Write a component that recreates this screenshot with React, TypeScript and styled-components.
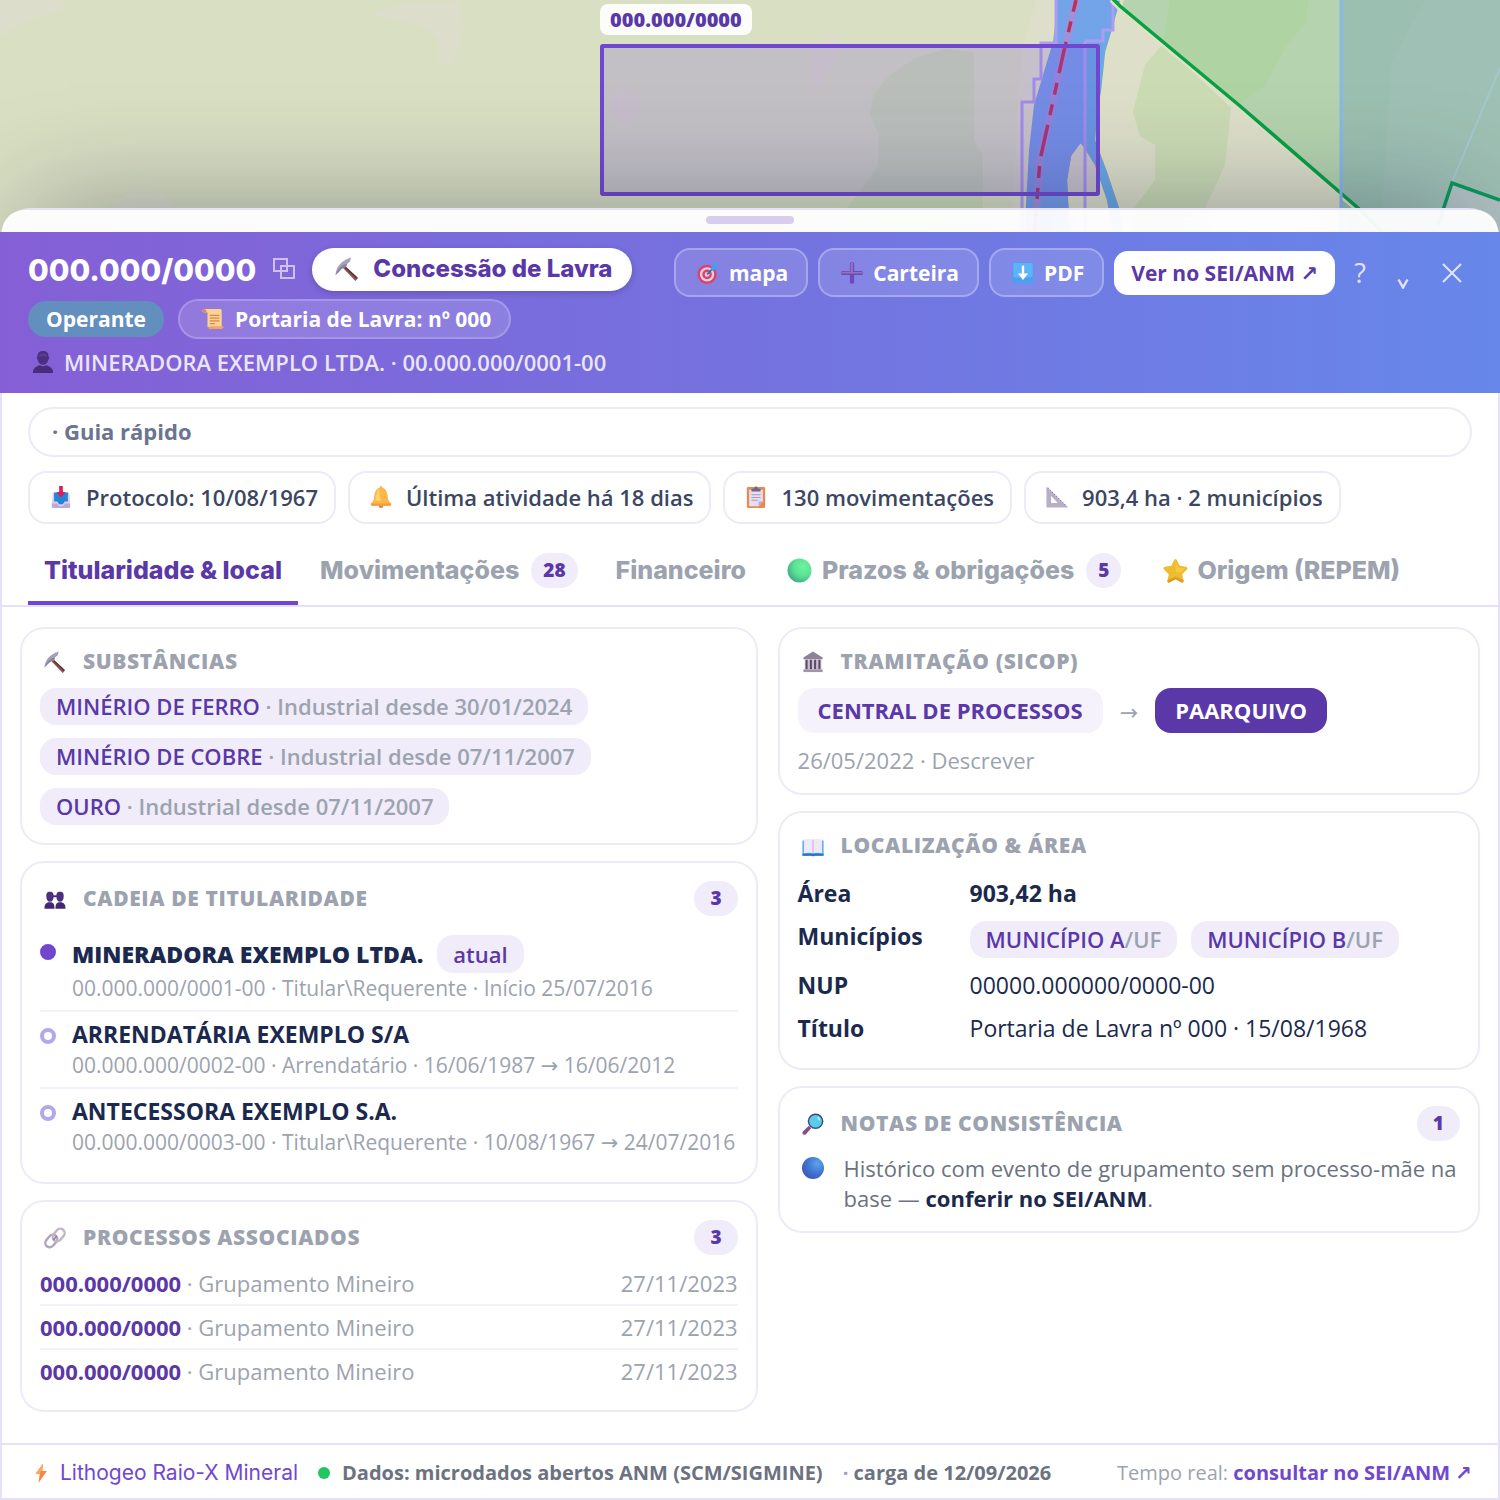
import React, { useState } from "react";
import styled, { createGlobalStyle } from "styled-components";

const c = {
  violet: "#7048d0",
  deep: "#5a38a8",
  lilac: "#f0ecfa",
  line: "#eeeafa",
  edge: "#e6e1f8",
  muted: "#9ca3af",
  slate: "#6b7280",
  ink: "#1b294e",
};
const sans = `"Open Sans", "DejaVu Sans", "Noto Sans", sans-serif`;
const display = `Inter, "Open Sans", sans-serif`;

const GlobalStyle = createGlobalStyle`
  *, *::before, *::after { box-sizing: border-box; }
  body { margin: 0; background: #d9dfc2; font-family: ${sans}; font-size: 22px; line-height: 30px; color: ${c.ink}; }
  button { font: inherit; color: inherit; background: none; border: 0; padding: 0; cursor: pointer; }
  a { color: inherit; text-decoration: none; }
  h1, h2, p, ul, ol, dl, dd { margin: 0; padding: 0; list-style: none; }
`;

/* ---------- icons ---------- */

type IconName =
  | "pick" | "scroll" | "person" | "target" | "plus" | "download" | "inbox" | "bell" | "clipboard"
  | "ruler" | "green" | "star" | "people" | "link" | "bank" | "book" | "lens" | "blue" | "bolt";

const drawings: Record<IconName, React.ReactNode> = {
  pick: (
    <>
      <path d="M9 8 L23 21 L20.500 24 L7.500 10.500Z" fill="#8a5350" />
      <path d="M11 10 L22.500 20.500 L21.500 21.800 L10 11Z" fill="#5f3440" />
      <path d="M0.500 18 C1 11 5 4 16 0.500 L15 4.500 L12 7 L11 10 L8 11 C5 13 4 15 0.500 18Z" fill="#a99fba" />
      <path d="M0.500 18 C3 12 7 7 12 7 L11 10 L8 11 C5 13 4 15 0.500 18Z" fill="#8c8299" />
    </>
  ),
  scroll: (
    <>
      <path d="M2 1 H20 C21 1 21.500 2 21.500 3.500 V21 H6 V5 H2 C0 4 0 1 2 1Z" fill="#fbd391" />
      <path d="M2 1 C4 1 5 2 5 5 H2 C0 4 0 1 2 1Z" fill="#d98a55" />
      <path d="M8 20 H23.500 C23.500 22 23 23 21 23 H6 C8 23 8 21 8 20Z" fill="#f0a468" />
      <path d="M8.500 8 H19 M8.500 11 H19 M8.500 14 H19 M8.500 17 H14" stroke="#d98556" strokeWidth="1.200" />
    </>
  ),
  person: (
    <>
      <path d="M12 0 C16.500 0 18 2.500 18 6 C19 6 19 9 17.800 9.500 C17 13 15 15 12 15 S7 13 6.200 9.500 C5 9 5 6 6 6 C6 2.500 7.500 0 12 0Z" fill="#4d2f80" />
      <path d="M1 24 C1 18 5 16.500 9 15.500 C11 17 13 17 15 15.500 C19 16.500 23 18 23 24Z" fill="#4a2c7c" />
      <path d="M8 4 C10 2 14 2 16 4 V7 C14 5 10 5 8 7Z" fill="#5b3b92" />
    </>
  ),
  target: (
    <>
      <circle cx="11" cy="13.500" r="10.500" fill="#e0416b" />
      <circle cx="11" cy="13.500" r="7.800" fill="#d8cfe4" />
      <circle cx="11" cy="13.500" r="5.200" fill="#e0416b" />
      <circle cx="11" cy="13.500" r="2.600" fill="#d8cfe4" />
      <path d="M11 13.500 L18 6.500" stroke="#2c6fb4" strokeWidth="1.800" />
      <path d="M15 8.500 L16 3.500 L19.500 0.500 L20.300 3.700 L23.500 4.700 L20.500 8 L15.800 9.300Z" fill="#3aa5ef" />
    </>
  ),
  plus: (
    <>
      <path d="M9.700 1 Q12 -0.500 14.300 1 V9.700 H23 Q24.500 12 23 14.300 H14.300 V23 Q12 24.500 9.700 23 V14.300 H1 Q-0.500 12 1 9.700 H9.700Z" fill="#7147ba" />
      <path d="M10.500 1 H13 V11 H23 V12.500 H1 V10.500 H10.500Z" fill="#8f76bb" />
    </>
  ),
  download: (
    <>
      <rect x="0.500" y="0.500" width="23" height="23" rx="2" fill="#4d9ff0" />
      <rect x="1.500" y="1" width="21" height="16" rx="2" fill="#5fb3fb" />
      <path d="M12 4 V17" stroke="#fff" strokeWidth="2.600" />
      <path d="M6.500 12.500 H17.500 L12 19.500Z" fill="#fff" />
    </>
  ),
  inbox: (
    <>
      <path d="M3 7 H21 L22 19 V22 Q22 24 20 24 H4 Q2 24 2 22 V19Z" fill="#d6d0e4" />
      <path d="M4.500 7 H19.500 V17 H16 L14 20 H10 L8 17 H4.500Z" fill="#2485d6" />
      <path d="M2 19 H8 L10 22 H14 L16 19 H22 V22 Q22 24 20 24 H4 Q2 24 2 22Z" fill="#bda9d6" />
      <path d="M10 0 H14 V6.500 H17 L12 12.500 L7 6.500 H10Z" fill="#d91f5a" />
    </>
  ),
  bell: (
    <>
      <circle cx="12" cy="21.500" r="2.500" fill="#e27b39" />
      <path d="M12 0 Q13.500 0 13.500 2 C18 3 19 8 19.500 13 Q20 17 23 19 Q23.500 21.500 21 21.500 H3 Q0.500 21.500 1 19 Q4 17 4.500 13 C5 8 6 3 10.500 2 Q10.500 0 12 0Z" fill="#fdb748" />
      <path d="M10.500 3 C7 5 6.500 12 6 16 H12 C10 11 10 6 10.500 3Z" fill="#ffd56f" />
      <path d="M1 19 H23 Q23.500 21.500 21 21.500 H3 Q0.500 21.500 1 19Z" fill="#f59b3c" />
    </>
  ),
  clipboard: (
    <>
      <rect x="2" y="1" width="20" height="23" rx="1.500" fill="#e68a51" />
      <path d="M4.500 4 H19.500 V17 L15 22 H4.500Z" fill="#e6ddf3" />
      <path d="M15 22 V17 H19.500Z" fill="#b9a6d3" />
      <path d="M7 3 H9.500 Q12 -2.500 14.500 3 H17 V6 H7Z" fill="#716782" />
      <path d="M7 9.500 H17 M7 12.500 H17 M7 15.500 H14" stroke="#a99dba" strokeWidth="1.200" />
    </>
  ),
  ruler: (
    <>
      <path fillRule="evenodd" d="M0.500 0.500 L24 23.500 H0.500Z M5.500 11 V18.500 H13Z" fill="#b7b0c4" />
      <path d="M2 2 L23 22.500" stroke="#9277c8" strokeWidth="1.300" strokeDasharray="1.200 2" />
    </>
  ),
  green: <circle cx="12" cy="12" r="11.500" fill="url(#ball-green)" />,
  blue: <circle cx="12" cy="12" r="12" fill="url(#ball-blue)" />,
  star: (
    <>
      <path d="M12 1 Q13 1 13.600 2.500 L16 7.500 L22 8.500 Q24.500 9.300 23 11 L18.500 15.500 L19.800 22 Q19.800 24.200 17.800 23.500 L12 20.500 L6.200 23.500 Q4.200 24.200 4.200 22 L5.500 15.500 L1 11 Q-0.500 9.300 2 8.500 L8 7.500 L10.400 2.500 Q11 1 12 1Z" fill="#eebd2f" />
      <path d="M12 3 L15 9 L21 10 L16.500 14.500 L12 13Z" fill="#f5c93d" />
      <path d="M4.300 21 L12 18 L19.700 21 Q20 24.200 17.800 23.500 L12 20.500 L6.200 23.500 Q4.200 24.200 4.300 21Z" fill="#dc9d25" />
    </>
  ),
  people: (
    <>
      <path d="M6.500 4 C10 4 10.500 6 10.500 9 C10.500 13 9 15 6.500 15 S2.500 13 2.500 9 C2.500 6 3 4 6.500 4Z M17.500 4 C21 4 21.500 6 21.500 9 C21.500 13 20 15 17.500 15 S13.500 13 13.500 9 C13.500 6 14 4 17.500 4Z" fill="#4d2f80" />
      <path d="M10 8 H14 V10 H10Z" fill="#3d2468" />
      <path d="M0.500 22.500 C0.500 17 3 15.500 6.500 15.500 C10 15.500 11.500 17 11.500 22.500Z M12.500 22.500 C12.500 17 14 15.500 17.500 15.500 C21 15.500 23.500 17 23.500 22.500Z" fill="#432774" />
    </>
  ),
  link: (
    <g fill="none" strokeWidth="2.600">
      <rect x="0.500" y="10.500" width="15" height="9.500" rx="4.750" transform="rotate(-50 8 15.300)" stroke="#b3a5bb" />
      <rect x="8.500" y="4" width="15" height="9.500" rx="4.750" transform="rotate(-50 16 8.700)" stroke="#c3b6c8" />
      <path d="M10 14.500 L14 9.500" stroke="#9686a0" strokeWidth="2" />
    </g>
  ),
  bank: (
    <>
      <path d="M12 0.500 L22.500 7 V9 H1.500 V7Z" fill="#8d8399" />
      <path d="M3 9 H21 V20 H3Z" fill="#c9bfd1" />
      <path d="M5 9.500 V20 M9.700 9.500 V20 M14.300 9.500 V20 M19 9.500 V20" stroke="#594b69" strokeWidth="2.200" />
      <path d="M1.500 20 H22.500 V23 H1.500Z" fill="#9f95a9" />
    </>
  ),
  book: (
    <>
      <path d="M0.500 6 H23.500 V22.500 H0.500Z" fill="#4aa4ea" />
      <path d="M0.500 20.500 H23.500 V22.500 H13.500 L12 23.500 L10.500 22.500 H0.500Z" fill="#2772c9" />
      <path d="M2 5 Q8 3.500 12 5 Q16 3.500 22 5 V20 Q16 18.800 12 20 Q8 18.800 2 20Z" fill="#efe8f8" />
      <path d="M12 5 V20" stroke="#cfbfe4" strokeWidth="1.500" />
    </>
  ),
  lens: (
    <>
      <path d="M7.500 14 L10 16.500 L4 23.500 Q1.500 24.500 0.500 22 Q0.200 20.800 1.500 19.500Z" fill="#8b4a85" />
      <circle cx="14.800" cy="9" r="8.500" fill="#3a4a80" />
      <circle cx="14.800" cy="9" r="6.900" fill="#5ccbea" />
      <path d="M17 4.500 Q19.500 6 19 8" stroke="#c9f2fb" strokeWidth="1.400" fill="none" />
    </>
  ),
  bolt: (
    <>
      <path d="M14.500 0.500 L5.500 13 H10.500 L9 24 L19 9.500 H13.500Z" fill="#f98448" />
      <path d="M14.500 0.500 L5.500 13 H10.500 L12 9.500 H13.500Z" fill="#fbab55" />
    </>
  ),
};

const IconBox = styled.span<{ $box: number }>`
  flex: none;
  display: inline-flex;
  align-items: center;
  justify-content: center;
  width: ${(p) => p.$box}px;
`;

function Icon({ name, size = 22, box = 30 }: { name: IconName; size?: number; box?: number }) {
  return (
    <IconBox $box={box} aria-hidden="true">
      <svg width={size} height={size} viewBox="0 0 24 24">{drawings[name]}</svg>
    </IconBox>
  );
}

/* ---------- map ---------- */

const Page = styled.div`
  display: flex;
  flex-direction: column;
  min-height: 100vh;
`;

const MapArea = styled.section`
  position: relative;
  height: 240px;
  overflow: hidden;
`;

const MapDrawing = styled.svg`
  display: block;
  width: 100%;
  height: 100%;
`;

const MapLabel = styled.span`
  position: absolute;
  top: 4px;
  left: 40%;
  padding: 2px 10px 1px;
  border-radius: 8px;
  background: rgba(255, 255, 255, 0.92);
  color: ${c.deep};
  font-size: 20px;
  line-height: 28px;
  font-weight: 800;
`;

function MapView() {
  return (
    <MapArea aria-label="Mapa">
      <MapDrawing viewBox="0 0 1500 240" preserveAspectRatio="xMidYMin slice">
        <defs>
          <radialGradient id="ball-green" cx="0.650" cy="0.350" r="0.750">
            <stop offset="0" stopColor="#6bf59d" />
            <stop offset="0.500" stopColor="#5be394" />
            <stop offset="1" stopColor="#3fa287" />
          </radialGradient>
          <radialGradient id="ball-blue" cx="0.700" cy="0.300" r="0.800">
            <stop offset="0" stopColor="#5ba3ea" />
            <stop offset="0.600" stopColor="#3f72d0" />
            <stop offset="1" stopColor="#3f55b8" />
          </radialGradient>
        </defs>
        <rect width="1500" height="240" fill="#d9dfc2" />
        <path d="M0 0 H65 L62 10 L24 22 L0 37Z M368 14 L400 5 L420 2 H460 L463 30 L453 66 L438 62 V40 L425 27 L400 20Z M118 200 L135 190 L165 193 L175 208 H115Z" fill="#dcdecb" />
        <path d="M1036 0 H1120 V240 H1010 L1022 50Z" fill="#dddfca" />
        <ellipse cx="625" cy="107" rx="15" ry="16" fill="#dddbc9" />
        <path d="M812 48 L822 35 L838 33 L837 62 L820 85 L812 92Z" fill="#dddbc9" />
        <path d="M870 114 L873 95 L890 75 L915 58 L945 49 L974 52 V140 L983 155 V240 H820 L860 192 L878 165 L879 135Z" fill="#cdddb6" />
        {/* east bank */}
        <path d="M1120 0 H1341 V240 H1100 V60Z" fill="#dddfc8" />
        <path d="M1124 0 H1341 V195 L1122 8Z" fill="#b5d3ae" />
        <path d="M1170 0 H1308 L1306 22 L1285 48 L1268 80 L1263 88 L1236 106 L1163 44Z" fill="#afd3a3" />
        <path d="M1163 44 L1145 65 L1133 112 L1140 136 L1155 145 V180 L1134 208 V240 H1190 L1225 165 L1231 108Z" fill="#cbdbb4" />
        <rect x="1341" width="159" height="240" fill="#9bbfb0" />
        <path d="M1425 0 H1500 V240 H1380 L1391 62Z" fill="#9fc0b4" />
        <path d="M1452 182 L1500 202 V240 H1432Z" fill="#b3c3c3" />
        <path d="M1500 68 L1452 182" stroke="#a3c8cc" strokeWidth="2" fill="none" />
        {/* river */}
        <path d="M1057 0 H1121 L1112 32 L1106 52 L1102 90 L1098 112 L1096 140 L1108 172 L1120 208 L1124 240 H1114 L1106 200 L1094 165 L1081 144 L1072 156 L1068 180 L1071 240 H1024 L1029 150 L1034 105 L1043 75 L1052 45Z" fill="#6aa8e6" stroke="#e8e0b4" strokeWidth="1.500" />
        <path d="M1057 41 H1085 V148 L1080 143 L1071 156 L1067 180 L1070 240 H1024 L1029 150 L1034 105 L1043 75 L1052 45Z" fill="#769eea" />
        <path d="M1057 0 H1112 V30 L1103 31 V41 H1057Z" fill="#73a3e8" />
        <path d="M1085 41 V240 M1056 0 V43 H1041 V79 H1034 V102 H1022 V240 M1113 0 V30 H1103 V41 H1085" stroke="#ad9df0" strokeWidth="3" fill="none" />
        <path d="M1076 0 L1063 55 L1050 115 L1040 160 L1034 240" stroke="#9a93dc" strokeWidth="8" fill="none" />
        <path d="M1076 0 L1063 55 L1050 115 L1040 160 L1034 240" stroke="#b53260" strokeWidth="3.500" strokeDasharray="12 10 11 10 32 10" fill="none" />
        {/* boundaries */}
        <path d="M1112 -2 L1120 6 L1240 106 L1358 208 L1390 240" transform="translate(-1 2)" stroke="#e0e2c4" strokeWidth="4" fill="none" />
        <path d="M1112 -2 L1120 6 L1240 106 L1358 208 L1390 240" stroke="#08a045" strokeWidth="3.500" fill="none" />
        <path d="M1341 0 V240" stroke="#85b8f0" strokeWidth="3" />
        <path d="M1500 200 L1452 183 L1438 225" stroke="#0a985c" strokeWidth="3.500" fill="none" />
        <rect x="602" y="46" width="496" height="148" rx="1" fill="#7048d0" fillOpacity="0.200" stroke="#7048d0" strokeWidth="4" />
      </MapDrawing>
      <MapLabel>000.000/0000</MapLabel>
    </MapArea>
  );
}

/* ---------- sheet ---------- */

const Sheet = styled.main`
  position: relative;
  flex: 1;
  display: flex;
  flex-direction: column;
  margin-top: -32px;
  border: 2px solid ${c.edge};
  border-radius: 32px 32px 0 0;
  box-shadow: 0 -32px 104px -32px rgba(15, 25, 60, 0.38);
`;

const Grip = styled.div`
  display: flex;
  justify-content: center;
  height: 22px;
  padding-top: 6px;
  border-radius: 30px 30px 0 0;
  background: rgba(255, 255, 255, 0.92);
  backdrop-filter: blur(16px);
  &::before {
    content: "";
    width: 88px;
    height: 8px;
    border-radius: 4px;
    background: #d8cdec;
  }
`;

const Header = styled.header`
  display: flex;
  align-items: flex-start;
  justify-content: space-between;
  gap: 20px;
  margin: 0 -2px;
  padding: 16px 28px;
  color: #fff;
  background: linear-gradient(90deg, #855fd6, #7670de 45%, #6787ea);
`;

const Identity = styled.div`
  display: flex;
  flex-direction: column;
  gap: 8px;
`;

const Line = styled.div<{ $gap: number }>`
  display: flex;
  align-items: center;
  gap: ${(p) => p.$gap}px;
`;

const ProcessNumber = styled.h1`
  font: 800 30px/42px ${display};
`;

const CopyButton = styled.button`
  display: flex;
  color: #cfc0f0;
`;

const RegimePill = styled.span`
  display: flex;
  align-items: center;
  gap: 11px;
  padding: 6px 20px 7px;
  border-radius: 22px;
  background: #fff;
  color: ${c.deep};
  font: 800 24px/30px ${display};
  box-shadow: 0 2px 6px rgba(40, 20, 90, 0.25);
`;

const StatusPill = styled.span`
  padding: 3px 18px;
  border-radius: 18px;
  background: #638fbe;
  font-size: 21px;
  font-weight: 700;
`;

const GrantPill = styled.span`
  display: flex;
  align-items: center;
  gap: 7px;
  padding: 3px 18px;
  border: 2px solid rgba(255, 255, 255, 0.2);
  border-radius: 20px;
  background: rgba(255, 255, 255, 0.14);
  font-size: 21px;
  font-weight: 700;
`;

const Owner = styled.p`
  display: flex;
  align-items: center;
  gap: 6px;
  color: #ebe5fa;
  font-weight: 600;
`;

const Actions = styled.div`
  display: flex;
  align-items: center;
  gap: 10px;
`;

const ActionButton = styled.button`
  display: flex;
  align-items: center;
  gap: 7px;
  padding: 8px 18px 7px;
  border: 2px solid rgba(255, 255, 255, 0.28);
  border-radius: 16px;
  background: rgba(255, 255, 255, 0.12);
  font-size: 21px;
  font-weight: 700;
`;

const SeiLink = styled.a`
  padding: 7px 17px;
  border-radius: 14px;
  background: #fff;
  color: ${c.deep};
  font-size: 21px;
  font-weight: 700;
`;

const GlyphButton = styled.button<{ $w: number }>`
  display: flex;
  align-items: center;
  justify-content: center;
  width: ${(p) => p.$w}px;
  height: 40px;
  color: #e1e4fb;
  font-size: 27px;
`;

const Body = styled.div`
  flex: 1;
  display: flex;
  flex-direction: column;
  background: #fff;
`;

const Summary = styled.div`
  display: flex;
  flex-direction: column;
  gap: 14px;
  padding: 14px 26px 0;
`;

const GuideButton = styled.button`
  padding: 7px 22px 9px;
  border: 2px solid ${c.line};
  border-radius: 25px;
  color: #6b7590;
  font-weight: 700;
  text-align: left;
`;

const Facts = styled.ul`
  display: flex;
  flex-wrap: wrap;
  gap: 12px;
`;

const Fact = styled.li`
  display: flex;
  align-items: center;
  gap: 10px;
  padding: 9px 16px 10px;
  border: 2px solid ${c.line};
  border-radius: 18px;
  color: #3b4662;
  font-weight: 600;
`;

const Tabs = styled.div`
  display: flex;
  gap: 6px;
  margin: 15px -2px 0;
  padding: 0 28px;
  border-bottom: 2px solid ${c.edge};
`;

const Tab = styled.button<{ $active: boolean }>`
  display: flex;
  align-items: center;
  gap: 6px;
  height: 66px;
  padding: 0 16px;
  border-bottom: 4px solid ${(p) => (p.$active ? c.violet : "transparent")};
  color: ${(p) => (p.$active ? c.deep : c.muted)};
  font: 800 25px/30px ${display};
  white-space: nowrap;
`;

const Count = styled.span`
  padding: 2px 16px 3px;
  border-radius: 18px;
  background: ${c.lilac};
  color: ${c.deep};
  font: 800 19px/30px ${sans};
`;

const TabCount = styled(Count)`
  margin-left: 6px;
  padding: 2px 12px 3px;
`;

const Columns = styled.div`
  display: grid;
  grid-template-columns: minmax(0, 1.05fr) minmax(0, 1fr);
  gap: 20px;
  padding: 20px 18px 30px;
`;

const Column = styled.div`
  display: flex;
  flex-direction: column;
  gap: 16px;
`;

const CardBox = styled.section`
  padding: 18px;
  border: 2px solid ${c.line};
  border-radius: 24px;
`;

const CardHead = styled.div<{ $after: number }>`
  display: flex;
  align-items: center;
  gap: 13px;
  margin-bottom: ${(p) => p.$after}px;
`;

const CardTitle = styled.h2`
  flex: 1;
  color: ${c.muted};
  font-size: 21px;
  line-height: 29px;
  font-weight: 800;
  letter-spacing: 0.03em;
  text-transform: uppercase;
`;

function Card(props: { icon: IconName; title: string; count?: number; after?: number; children: React.ReactNode }) {
  return (
    <CardBox>
      <CardHead $after={props.after ?? 12}>
        <Icon name={props.icon} />
        <CardTitle>{props.title}</CardTitle>
        {props.count && <Count>{props.count}</Count>}
      </CardHead>
      {props.children}
    </CardBox>
  );
}

const Stack = styled.ul`
  display: flex;
  flex-direction: column;
  align-items: flex-start;
  gap: 13px;
`;

const Tag = styled.span`
  display: block;
  padding: 3px 16px 4px;
  border-radius: 16px;
  background: ${c.lilac};
  color: ${c.deep};
  font-weight: 600;
`;

const Dim = styled.span`
  color: ${c.muted};
`;

const Holder = styled.li`
  display: flex;
  gap: 16px;
  padding: 7px 0;
  border-bottom: 2px solid #f3f1fb;
  &:last-child { border-bottom: 0; }
`;

const Bullet = styled.span<{ $current: boolean }>`
  flex: none;
  width: 16px;
  height: 16px;
  margin-top: 9px;
  border: 4px solid ${(p) => (p.$current ? c.violet : "#b4a8ec")};
  border-radius: 50%;
  background: ${(p) => (p.$current ? c.violet : "#fff")};
`;

const HolderName = styled.div<{ $current: boolean }>`
  display: flex;
  align-items: center;
  gap: 14px;
  font-size: 23px;
  line-height: 31px;
  font-weight: ${(p) => (p.$current ? 800 : 700)};
`;

const CurrentTag = styled(Tag)`
  padding: 4px 16px;
  font-size: 22px;
  line-height: 30px;
`;

const Muted = styled.p`
  color: ${c.muted};
`;

const HolderInfo = styled(Muted)`
  font-size: 21px;
`;

const Related = styled.li`
  display: flex;
  justify-content: space-between;
  padding: 6px 0;
  border-bottom: 2px solid #f3f1fb;
  color: ${c.muted};
  &:last-child { border-bottom: 0; }
`;

const RelatedLink = styled.a`
  color: ${c.deep};
  font-weight: 700;
`;

const Route = styled.div`
  display: flex;
  align-items: center;
  gap: 17px;
  margin-bottom: 12px;
  color: ${c.muted};
`;

const Step = styled.span<{ $final?: boolean }>`
  padding: 7px 20px 8px;
  border-radius: 16px;
  background: ${(p) => (p.$final ? c.deep : "#f5f2fc")};
  color: ${(p) => (p.$final ? "#fff" : c.deep)};
  font-weight: 700;
`;

const Details = styled.dl`
  font-size: 23px;
  line-height: 31px;
`;

const Detail = styled.div`
  display: grid;
  grid-template-columns: 172px 1fr;
  padding: 6px 0;
  dt { font-weight: 700; }
`;

const Places = styled.dd`
  display: flex;
  flex-wrap: wrap;
  gap: 14px;
  font-size: 22px;
  line-height: 30px;
`;

const Strong = styled.strong`
  font-weight: 700;
  color: ${c.ink};
`;

const Note = styled.div`
  display: flex;
  align-items: flex-start;
  gap: 16px;
  color: ${c.slate};
`;

const NoteMark = styled.span`
  display: flex;
  height: 30px;
`;

const Footer = styled.footer`
  display: flex;
  align-items: center;
  gap: 20px;
  margin: auto -2px 0;
  padding: 13px 28px 10px;
  border-top: 2px solid ${c.edge};
  color: ${c.slate};
  font-size: 20px;
  font-weight: 700;
`;

const Brand = styled.span`
  display: flex;
  align-items: center;
  gap: 6px;
  color: ${c.violet};
  font: 400 21px/30px ${display};
`;

const Source = styled.span`
  display: flex;
  align-items: center;
  gap: 12px;
  &::before {
    content: "";
    width: 12px;
    height: 12px;
    border-radius: 50%;
    background: #22c55e;
  }
`;

const Live = styled.span`
  margin-left: auto;
  color: ${c.muted};
  font-weight: 400;
`;

const LiveLink = styled.a`
  color: ${c.violet};
  font-weight: 700;
`;

const tabs: { label: string; icon?: IconName; count?: number }[] = [
  { label: "Titularidade & local" },
  { label: "Movimentações", count: 28 },
  { label: "Financeiro" },
  { label: "Prazos & obrigações", icon: "green", count: 5 },
  { label: "Origem (REPEM)", icon: "star" },
];

const facts: { icon: IconName; text: string }[] = [
  { icon: "inbox", text: "Protocolo: 10/08/1967" },
  { icon: "bell", text: "Última atividade há 18 dias" },
  { icon: "clipboard", text: "130 movimentações" },
  { icon: "ruler", text: "903,4 ha · 2 municípios" },
];

const substances = [
  ["MINÉRIO DE FERRO", "30/01/2024"],
  ["MINÉRIO DE COBRE", "07/11/2007"],
  ["OURO", "07/11/2007"],
];

const holders = [
  { name: "MINERADORA EXEMPLO LTDA.", info: "00.000.000/0001-00 · Titular\\Requerente · Início 25/07/2016", current: true },
  { name: "ARRENDATÁRIA EXEMPLO S/A", info: "00.000.000/0002-00 · Arrendatário · 16/06/1987 → 16/06/2012", current: false },
  { name: "ANTECESSORA EXEMPLO S.A.", info: "00.000.000/0003-00 · Titular\\Requerente · 10/08/1967 → 24/07/2016", current: false },
];

export default function App() {
  const [active, setActive] = useState(0);
  return (
    <Page>
      <GlobalStyle />
      <MapView />
      <Sheet>
        <Grip />
        <Header>
          <Identity>
            <Line $gap={16}>
              <ProcessNumber>000.000/0000</ProcessNumber>
              <CopyButton aria-label="Copiar número">
                <svg width="24" height="24" viewBox="0 0 24 24" fill="none" stroke="currentColor" strokeWidth="2">
                  <path d="M2 1 H15 V13 H2Z M9 8 H22 V20 H9Z" />
                </svg>
              </CopyButton>
              <RegimePill><Icon name="pick" size={24} />Concessão de Lavra</RegimePill>
            </Line>
            <Line $gap={14}>
              <StatusPill>Operante</StatusPill>
              <GrantPill><Icon name="scroll" />Portaria de Lavra: nº 000</GrantPill>
            </Line>
            <Owner><Icon name="person" />MINERADORA EXEMPLO LTDA. · 00.000.000/0001-00</Owner>
          </Identity>
          <Actions>
            <ActionButton><Icon name="target" box={28} />mapa</ActionButton>
            <ActionButton><Icon name="plus" box={28} />Carteira</ActionButton>
            <ActionButton><Icon name="download" box={28} />PDF</ActionButton>
            <SeiLink href="#sei">Ver no SEI/ANM ↗</SeiLink>
            <GlyphButton $w={30} aria-label="Ajuda">?</GlyphButton>
            <GlyphButton $w={36} aria-label="Recolher">
              <svg width="12" height="32" viewBox="0 0 12 32" fill="none" stroke="currentColor" strokeWidth="2.400">
                <path d="M1.500 22.500 L6 30.500 L10.500 22.500" />
              </svg>
            </GlyphButton>
            <GlyphButton $w={41} aria-label="Fechar">
              <svg width="22" height="22" viewBox="0 0 22 22" fill="none" stroke="currentColor" strokeWidth="2">
                <path d="M2 2 L20 20 M20 2 L2 20" />
              </svg>
            </GlyphButton>
          </Actions>
        </Header>
        <Body>
          <Summary>
            <GuideButton>· Guia rápido</GuideButton>
            <Facts>
              {facts.map((f) => (
                <Fact key={f.text}><Icon name={f.icon} />{f.text}</Fact>
              ))}
            </Facts>
          </Summary>
          <Tabs role="tablist">
            {tabs.map((t, i) => (
              <Tab key={t.label} role="tab" aria-selected={i === active} $active={i === active} onClick={() => setActive(i)}>
                {t.icon && <Icon name={t.icon} size={25} box={32} />}
                {t.label}
                {t.count && <TabCount>{t.count}</TabCount>}
              </Tab>
            ))}
          </Tabs>
          <Columns>
            <Column>
              <Card icon="pick" title="Substâncias">
                <Stack>
                  {substances.map(([name, date]) => (
                    <li key={name}><Tag>{name}<Dim> · Industrial desde {date}</Dim></Tag></li>
                  ))}
                </Stack>
              </Card>
              <Card icon="people" title="Cadeia de titularidade" count={3}>
                <ol>
                  {holders.map((h) => (
                    <Holder key={h.name}>
                      <Bullet $current={h.current} />
                      <div>
                        <HolderName $current={h.current}>
                          {h.name}
                          {h.current && <CurrentTag>atual</CurrentTag>}
                        </HolderName>
                        <HolderInfo>{h.info}</HolderInfo>
                      </div>
                    </Holder>
                  ))}
                </ol>
              </Card>
              <Card icon="link" title="Processos associados" count={3} after={7}>
                <ul>
                  {[1, 2, 3].map((n) => (
                    <Related key={n}>
                      <span><RelatedLink href="#processo">000.000/0000</RelatedLink> · Grupamento Mineiro</span>
                      <time>27/11/2023</time>
                    </Related>
                  ))}
                </ul>
              </Card>
            </Column>
            <Column>
              <Card icon="bank" title="Tramitação (SICOP)">
                <Route>
                  <Step>CENTRAL DE PROCESSOS</Step>
                  <span>→</span>
                  <Step $final>PAARQUIVO</Step>
                </Route>
                <Muted>26/05/2022 · Descrever</Muted>
              </Card>
              <Card icon="book" title="Localização & área">
                <Details>
                  <Detail><dt>Área</dt><dd><Strong>903,42 ha</Strong></dd></Detail>
                  <Detail>
                    <dt>Municípios</dt>
                    <Places>
                      <Tag>MUNICÍPIO A<Dim>/UF</Dim></Tag>
                      <Tag>MUNICÍPIO B<Dim>/UF</Dim></Tag>
                    </Places>
                  </Detail>
                  <Detail><dt>NUP</dt><dd>00000.000000/0000-00</dd></Detail>
                  <Detail><dt>Título</dt><dd>Portaria de Lavra nº 000 · 15/08/1968</dd></Detail>
                </Details>
              </Card>
              <Card icon="lens" title="Notas de consistência" count={1}>
                <Note>
                  <NoteMark><Icon name="blue" /></NoteMark>
                  <p>Histórico com evento de grupamento sem processo-mãe na base — <Strong>conferir no SEI/ANM</Strong>.</p>
                </Note>
              </Card>
            </Column>
          </Columns>
          <Footer>
            <Brand><Icon name="bolt" box={26} size={20} />Lithogeo Raio-X Mineral</Brand>
            <Source>Dados: microdados abertos ANM (SCM/SIGMINE)</Source>
            <span><Dim>· </Dim>carga de 12/09/2026</span>
            <Live>Tempo real: <LiveLink href="#sei">consultar no SEI/ANM ↗</LiveLink></Live>
          </Footer>
        </Body>
      </Sheet>
    </Page>
  );
}
